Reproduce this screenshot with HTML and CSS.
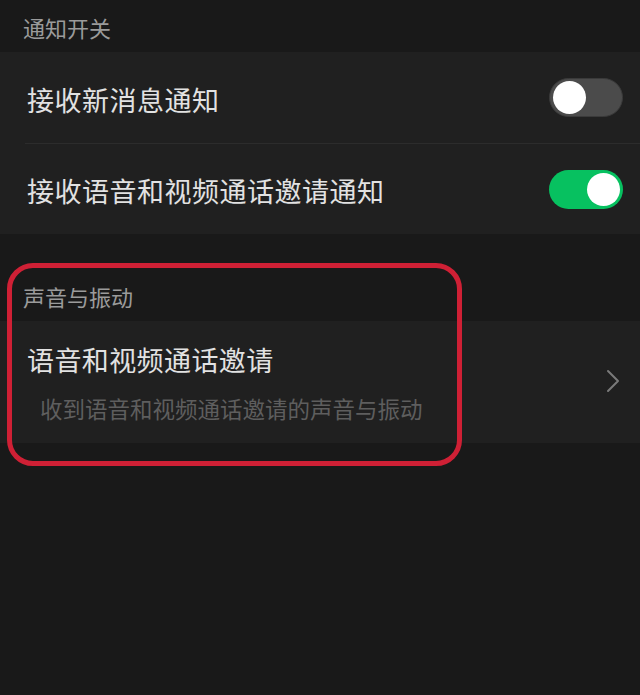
FILE: index.html
```html
<!DOCTYPE html>
<html lang="zh-CN">
<head>
<meta charset="utf-8">
<title>通知设置</title>
<link rel="stylesheet" href="styles.css">
</head>
<body>
<div class="page">
  <div class="section-title first">通知开关</div>
  <div class="card">
    <div class="row">
      <span class="row-label">接收新消息通知</span>
      <span class="switch off"><span class="knob"></span></span>
    </div>
    <div class="row">
      <span class="row-label">接收语音和视频通话邀请通知</span>
      <span class="switch on"><span class="knob"></span></span>
    </div>
  </div>
  <div class="section-title second">声音与振动</div>
  <div class="card">
    <div class="link-row">
      <div class="link-text">
        <div class="link-title">语音和视频通话邀请</div>
        <div class="link-sub">收到语音和视频通话邀请的声音与振动</div>
      </div>
      <svg class="chevron" width="14" height="24" viewBox="0 0 14 24"><path d="M2 2 L12 12 L2 22" fill="none" stroke="#7a7a7a" stroke-width="2" stroke-linecap="round" stroke-linejoin="round"/></svg>
    </div>
  </div>
  <div class="highlight"></div>
</div>
</body>
</html>
```
FILE: styles.css
```css
html, body {
  margin: 0;
  padding: 0;
  background: #191919;
}
body {
  font-family: "Noto Sans CJK SC", "Noto Sans", sans-serif;
  width: 640px;
  height: 695px;
  overflow: hidden;
}
.page {
  position: relative;
  width: 640px;
  height: 695px;
}
.section-title {
  color: #9b9b9b;
  font-size: 22px;
  line-height: 30px;
  padding-left: 23px;
}
.section-title.first {
  padding-top: 12px;
  padding-bottom: 10px;
}
.section-title.second {
  padding-top: 47px;
  padding-bottom: 10px;
}
.card {
  background: #202020;
}
.row {
  height: 91px;
  display: flex;
  align-items: center;
  justify-content: space-between;
  padding-left: 27px;
  padding-right: 17px;
  box-sizing: border-box;
  position: relative;
}
.row + .row {
  border-top: 1px solid #2c2c2c;
  margin-left: 25px;
  padding-left: 2px;
}
.row-label {
  color: #e2e2e2;
  font-size: 27px;
  line-height: 34px;
  letter-spacing: 0.5px;
  padding-top: 4px;
}
.switch {
  width: 74px;
  height: 39px;
  border-radius: 20px;
  box-sizing: border-box;
  display: flex;
  align-items: center;
  padding: 0 3px;
}
.switch.off {
  background: #4b4b4b;
  border: 1px solid #3a3a3a;
  justify-content: flex-start;
}
.switch.on {
  background: #07c160;
  justify-content: flex-end;
}
.knob {
  width: 33px;
  height: 33px;
  border-radius: 50%;
  background: #ffffff;
}
.link-row {
  display: flex;
  align-items: center;
  justify-content: space-between;
  padding: 22px 20px 20px 27px;
  height: 122px;
  box-sizing: border-box;
}
.link-title {
  color: #e2e2e2;
  font-size: 27px;
  line-height: 34px;
  letter-spacing: 0.4px;
}
.link-sub {
  color: #5e5e5e;
  font-size: 22.5px;
  line-height: 30px;
  margin-top: 16px;
  padding-left: 13px;
}
.chevron {
  display: block;
  margin-top: -4px;
}
.highlight {
  position: absolute;
  left: 7px;
  top: 263px;
  width: 455px;
  height: 203px;
  box-sizing: border-box;
  border: 5px solid #cf2035;
  border-radius: 26px;
  pointer-events: none;
}
```
